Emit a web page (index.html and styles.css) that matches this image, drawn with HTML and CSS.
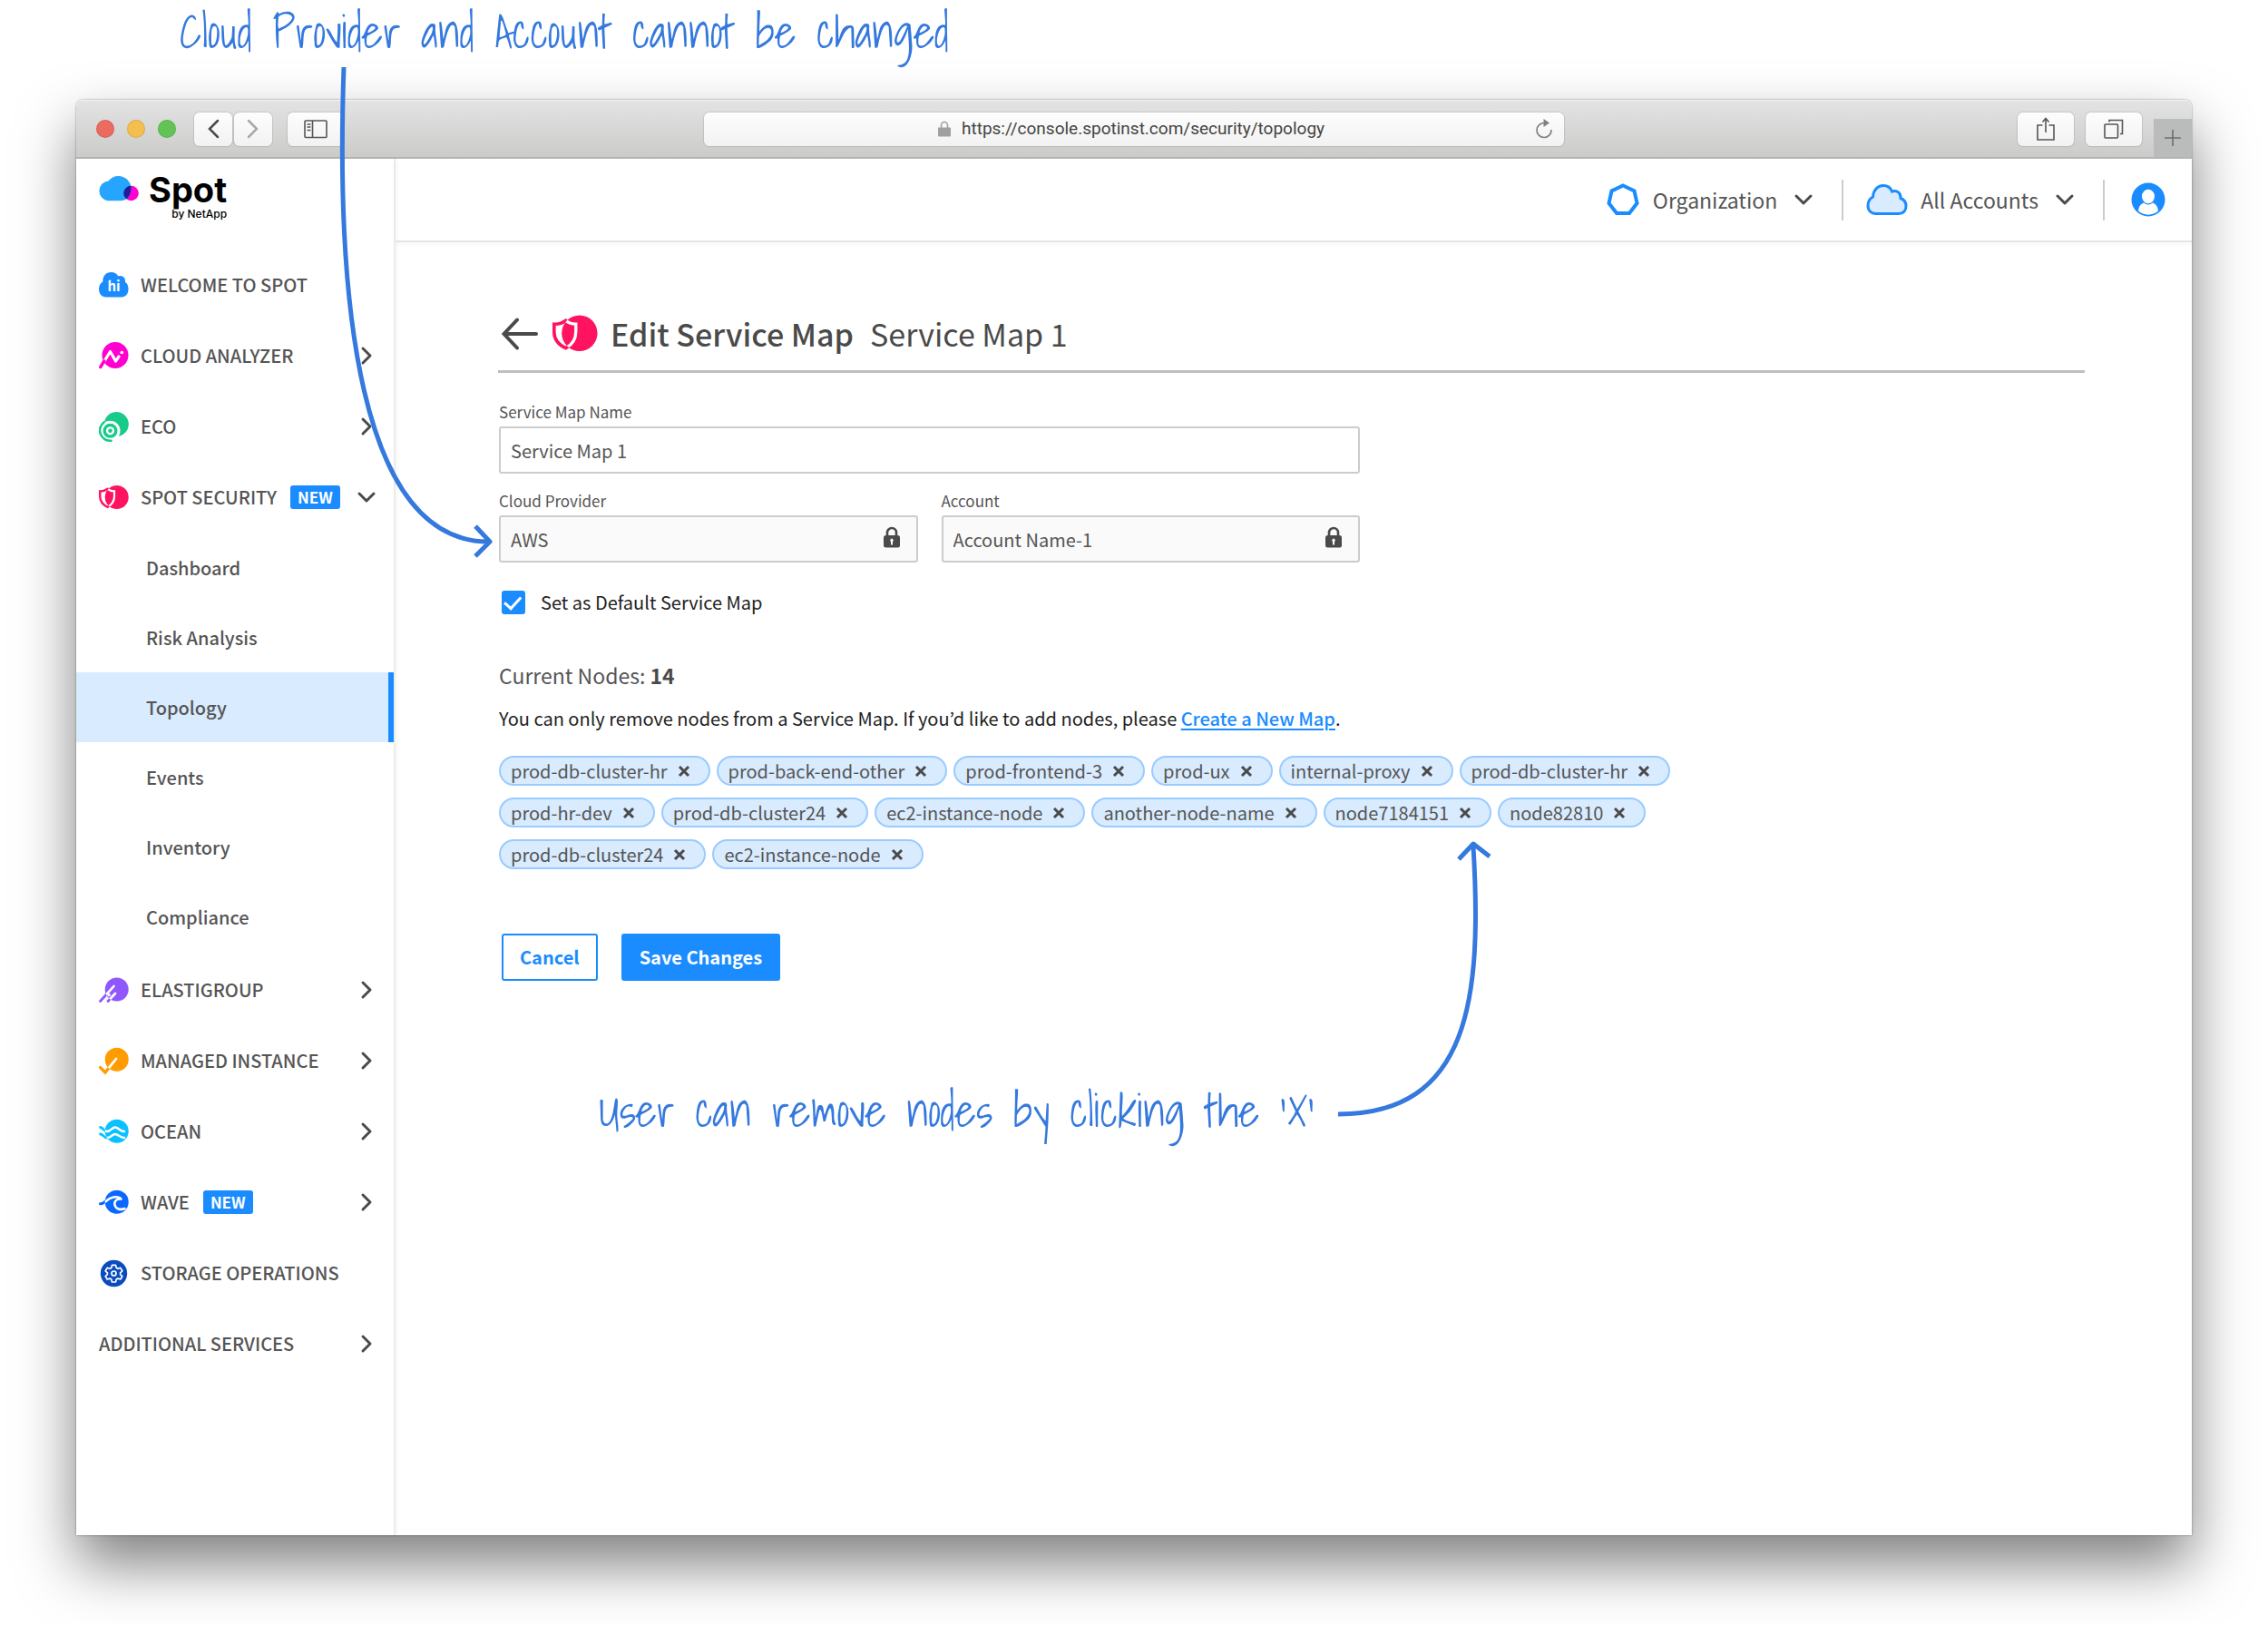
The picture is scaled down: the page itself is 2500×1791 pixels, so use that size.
FILE: index.html
```html
<!DOCTYPE html>
<html lang="en">
<head>
  <meta charset="UTF-8" />
  <meta name="viewport" content="width=device-width, initial-scale=1.0" />
  <title>Spot - Edit Service Map</title>
  <link rel="stylesheet" href="styles.css">
</head>
<body>
  <!-- shared icons -->
  <svg class="sprite" aria-hidden="true">
    <symbol id="i-right" viewBox="0 0 14 22"><path d="M3 3l8 8-8 8" /></symbol>
    <symbol id="i-down" viewBox="0 0 22 14"><path d="M3 3l8 8 8-8" /></symbol>
    <symbol id="i-x" viewBox="0 0 14 14"><path d="M2 2l10 10M12 2L2 12" /></symbol>
    <symbol id="i-lock" viewBox="0 0 20 24">
      <path d="M5 11V7a5 5 0 0 1 10 0v4" fill="none" stroke="#4a4a4a" stroke-width="2.6" />
      <rect x="1" y="10" width="18" height="13.5" rx="2.5" fill="#4a4a4a" />
      <path d="M10 13.6a1.9 1.9 0 0 1 1 3.4v3.4H9V17a1.9 1.9 0 0 1 1-3.4z" fill="#fafafa" />
    </symbol>
    <symbol id="i-security" viewBox="0 0 33 33">
      <clipPath id="c-sec"><circle cx="19.7" cy="16" r="13" /></clipPath>
      <path d="M9.7 6.8C7 8.8 4 9.6 1.2 9.4V15c0 5.5 3.3 9.5 8.5 11.8C14 24.5 17 20.5 17 15V9.4c-2.7 0-5-.6-7.3-2.6z" fill="none" stroke="#ff1260" stroke-width="2.4" />
      <circle cx="19.7" cy="16" r="13" fill="#ff1260" />
      <path d="M9.7 6.8C7 8.8 4 9.6 1.2 9.4V15c0 5.5 3.3 9.5 8.5 11.8C14 24.5 17 20.5 17 15V9.4c-2.7 0-5-.6-7.3-2.6z" fill="none" stroke="#fff" stroke-width="2.2" clip-path="url(#c-sec)" />
    </symbol>
  </svg>

  <div class="window">
    <div class="toolbar">
      <div class="toolbar-left">
        <span class="light red"></span>
        <span class="light yellow"></span>
        <span class="light green"></span>
        <div class="history">
          <button class="tool" aria-label="Back"><svg width="14" height="22" viewBox="0 0 14 22"><path d="M12 2L3 11l9 9" fill="none" stroke="#4a4a4a" stroke-width="2.5" stroke-linecap="round" /></svg></button>
          <button class="tool" aria-label="Forward"><svg width="14" height="22" viewBox="0 0 14 22"><path d="M2 2l9 9-9 9" fill="none" stroke="#a9a9a9" stroke-width="2.5" stroke-linecap="round" /></svg></button>
        </div>
        <button class="tool wide" aria-label="Show sidebar"><svg width="26" height="22" viewBox="0 0 26 22" fill="none" stroke="#555" stroke-width="1.6"><rect x="1" y="2" width="24" height="18.5" rx="1" /><path d="M9.5 2v18.5M3.5 6h4M3.5 9h4M3.5 12.5h4" /></svg></button>
      </div>
      <div class="address">
        <svg width="14" height="18" viewBox="0 0 14 18"><path d="M3.5 8V5a3.5 3.5 0 0 1 7 0v3" fill="none" stroke="#a0a0a0" stroke-width="1.6" /><rect y="7.5" width="14" height="10" rx="1" fill="#a0a0a0" /></svg>
        <input type="text" aria-label="Address" value="https://console.spotinst.com/security/topology">
        <button class="reload" aria-label="Reload"><svg width="20" height="22" viewBox="0 0 20 22"><path d="M10.5 4.5A8 8 0 1 0 18 12" fill="none" stroke="#808080" stroke-width="1.7" /><path d="M9.5 0l6.500 4.500-6.500 4.500z" fill="#808080" /></svg></button>
      </div>
      <div class="toolbar-right">
        <button class="tool wide" aria-label="Share"><svg width="20" height="26" viewBox="0 0 20 26" fill="none" stroke="#555" stroke-width="1.6"><path d="M6.5 9H1v16h18V9h-5.5M10 17V1.5M6.5 5.5L10 1.5l3.5 4" /></svg></button>
        <button class="tool wide" aria-label="Tabs"><svg width="22" height="22" viewBox="0 0 22 22" fill="none" stroke="#555" stroke-width="1.6"><rect x="1" y="6" width="14.5" height="15" rx="1" /><path d="M6 3.5v-2h14.500v15H18" /></svg></button>
        <button class="new-tab" aria-label="New tab"><svg width="20" height="20" viewBox="0 0 20 20"><path d="M10 1v18M1 10h18" stroke="#6d6d6d" stroke-width="1.6" /></svg></button>
      </div>
    </div>

    <div class="app">
      <aside class="sidebar">
        <div class="logo">
          <svg width="46" height="30" viewBox="0 0 46 30">
            <clipPath id="c-logo"><circle cx="36.5" cy="20" r="8.3" /></clipPath>
            <circle cx="36.5" cy="20" r="8.3" fill="#ff00d0" />
            <path d="M10.5 28.3A11 11 0 0 1 11.5 6.5C14 3 18 1 22.5 1 30.5 1 37 7.5 36.5 15.5 35.5 24 31 28.3 25 28.3z" fill="#26a5ff" />
            <path d="M10.5 28.3A11 11 0 0 1 11.5 6.5C14 3 18 1 22.5 1 30.5 1 37 7.5 36.5 15.5 35.5 24 31 28.3 25 28.3z" fill="#1c1c9c" clip-path="url(#c-logo)" />
          </svg>
          <div class="logo-text">
            <span class="logo-name">Spot</span>
            <span class="logo-by">by NetApp</span>
          </div>
        </div>

        <nav class="nav">
          <a href="#" class="nav-item">
            <svg class="nav-icon" viewBox="0 0 33 33"><path d="M8 29.5c-5 0-8-4-8-9 0-4 2-7 4.300-8.100C4.300 6 8 2 13.500 2c3.500 0 6.500 1.700 7.800 4.500 4.200-1.700 8.500 1.500 7.700 6.300 2.500 1.700 3.500 4.700 3.500 7.700 0 5.500-3 9-7.500 9z" fill="#1a8cff" /><text x="16.5" y="23" class="hi">hi</text></svg>
            <span>WELCOME TO SPOT</span>
          </a>
          <a href="#" class="nav-item">
            <svg class="nav-icon" viewBox="0 0 33 33"><clipPath id="c-an"><circle cx="18" cy="15.5" r="14.5" /></clipPath><circle cx="18" cy="15.5" r="14.5" fill="#ff00d0" /><path d="M3 27l9.5-15.500L18.500 22l3.500-5" fill="none" stroke="#fff" stroke-width="3.2" stroke-linejoin="round" stroke-linecap="round" clip-path="url(#c-an)" /><circle cx="25.3" cy="12.5" r="1.8" fill="#fff" /><path d="M1.8 28.5l4-6.500" stroke="#ff00d0" stroke-width="3.4" stroke-linecap="round" /></svg>
            <span>CLOUD ANALYZER</span>
            <svg class="arrow"><use href="#i-right" /></svg>
          </a>
          <a href="#" class="nav-item">
            <svg class="nav-icon" viewBox="0 0 33 33"><circle cx="19.3" cy="13.5" r="13.5" fill="#17cb8a" /><circle cx="12.5" cy="20.8" r="11" fill="#fff" /><path d="M5.5 11.5a11.300 11.300 0 0 0 8 20.200" fill="none" stroke="#17cb8a" stroke-width="2.6" stroke-linecap="round" /><circle cx="12.5" cy="20.8" r="8" fill="#17cb8a" /><circle cx="12.5" cy="20.8" r="4.6" fill="#fff" /><circle cx="12.5" cy="20.8" r="2.3" fill="#17cb8a" /></svg>
            <span>ECO</span>
            <svg class="arrow"><use href="#i-right" /></svg>
          </a>
          <a href="#" class="nav-item">
            <svg class="nav-icon"><use href="#i-security" /></svg>
            <span>SPOT SECURITY</span>
            <span class="badge">NEW</span>
            <svg class="arrow down"><use href="#i-down" /></svg>
          </a>
          <div class="subnav">
            <a href="#">Dashboard</a>
            <a href="#">Risk Analysis</a>
            <a href="#" class="active">Topology</a>
            <a href="#">Events</a>
            <a href="#">Inventory</a>
            <a href="#">Compliance</a>
          </div>
          <a href="#" class="nav-item">
            <svg class="nav-icon" viewBox="0 0 33 33" stroke-linecap="round"><clipPath id="c-el"><circle cx="19.7" cy="15.5" r="13" /></clipPath><path d="M1.5 28.5l15-16.500M10 28.500l8-8.500" stroke="#9157ff" stroke-width="2.8" /><circle cx="19.7" cy="15.5" r="13" fill="#9157ff" /><path d="M1.5 28.500l15-16.500M10 28.500l8-8.500M11 22l.5-.5" stroke="#fff" stroke-width="2.6" clip-path="url(#c-el)" /></svg>
            <span>ELASTIGROUP</span>
            <svg class="arrow"><use href="#i-right" /></svg>
          </a>
          <a href="#" class="nav-item">
            <svg class="nav-icon" viewBox="0 0 33 33" fill="none" stroke-linecap="round"><clipPath id="c-mi"><circle cx="19.7" cy="14.7" r="13" /></clipPath><path d="M1.5 23.5L7 29l12-15" stroke="#ff9c00" stroke-width="3.2" /><circle cx="19.7" cy="14.7" r="13" fill="#ff9c00" /><path d="M1.5 23.5L7 29l12-15" stroke="#fff" stroke-width="2.8" clip-path="url(#c-mi)" /></svg>
            <span>MANAGED INSTANCE</span>
            <svg class="arrow"><use href="#i-right" /></svg>
          </a>
          <a href="#" class="nav-item">
            <svg class="nav-icon" viewBox="0 0 33 33" fill="none" stroke-linecap="round"><clipPath id="c-oc"><circle cx="19.7" cy="15.8" r="13" /></clipPath><path d="M1.5 11.5C5 11.5 5 16 9 16s5.500-4.500 9-4.500 5 4.500 10 4.500M1.500 19C5 19 5 23 9 23s5.500-4 9-4 5 4 10 4" stroke="#0bc0ff" stroke-width="2.8" /><circle cx="19.7" cy="15.8" r="13" fill="#0bc0ff" /><path d="M1.5 11.5C5 11.5 5 16 9 16s5.500-4.500 9-4.500 5 4.500 10 4.500M1.500 19C5 19 5 23 9 23s5.500-4 9-4 5 4 10 4" stroke="#fff" stroke-width="2.5" clip-path="url(#c-oc)" /></svg>
            <span>OCEAN</span>
            <svg class="arrow"><use href="#i-right" /></svg>
          </a>
          <a href="#" class="nav-item">
            <svg class="nav-icon" viewBox="0 0 33 33" fill="none" stroke-linecap="round"><clipPath id="c-wa"><circle cx="19.7" cy="15.8" r="13" /></clipPath><path d="M1.5 17.8C7 18 8 11.5 16 10.5" stroke="#0a68ff" stroke-width="3" /><circle cx="19.7" cy="15.8" r="13" fill="#0a68ff" /><path d="M1.5 17.8C7.5 18 8 12 16 10.500c4-.6 7 .2 8.500 2C20 12 16.500 14.500 17.500 19c1 4.500 6 6 11 4" stroke="#fff" stroke-width="2.6" stroke-linejoin="round" clip-path="url(#c-wa)" /></svg>
            <span>WAVE</span>
            <span class="badge">NEW</span>
            <svg class="arrow"><use href="#i-right" /></svg>
          </a>
          <a href="#" class="nav-item">
            <svg class="nav-icon" viewBox="0 0 33 33" fill="none" stroke="#fff" stroke-linejoin="round"><circle cx="16.5" cy="16.5" r="14.7" fill="#0b4cbd" stroke="none" /><path d="M14.5 7.400h4l.7 2.900 1.700 1 2.900-.9 2 3.400-2.200 2v1.800l2.200 2-2 3.400-2.900-.9-1.700 1-.7 2.900h-4l-.7-2.900-1.700-1-2.900.9-2-3.400 2.200-2v-1.800l-2.200-2 2-3.400 2.900.9 1.700-1z" stroke-width="1.7" /><circle cx="16.5" cy="16.5" r="2.5" stroke-width="1.7" /></svg>
            <span>STORAGE OPERATIONS</span>
          </a>
          <a href="#" class="nav-item">
            <span>ADDITIONAL SERVICES</span>
            <svg class="arrow"><use href="#i-right" /></svg>
          </a>
        </nav>
      </aside>

      <div class="page">
        <header class="topbar">
          <button class="picker">
            <svg width="38" height="38" viewBox="0 0 38 38"><path d="M19 3.5l12.500 6 3 13.500-8.500 11H12L3.500 23l3-13.500z" fill="none" stroke="#1a8cff" stroke-width="4" /></svg>
            <span>Organization</span>
            <svg class="caret"><use href="#i-down" /></svg>
          </button>
          <button class="picker">
            <svg width="46" height="36" viewBox="0 0 46 36"><path d="M11 33.500C5.500 33.500 2 30 2 24.500c0-4.500 2-7.500 5.500-9.500C8 7.500 12.500 2.500 19 2.500c4.500 0 8 2.500 9.500 6.500 5.500-2 10 2 9.500 7.500 4 1.500 6 5 6 8.500 0 5-3 8.500-8 8.500z" fill="#d9ebfe" stroke="#1a8cff" stroke-width="3" /></svg>
            <span>All Accounts</span>
            <svg class="caret"><use href="#i-down" /></svg>
          </button>
          <button class="profile" aria-label="Profile"><svg width="38" height="38" viewBox="0 0 38 38"><circle cx="19" cy="19" r="18.5" fill="#1a8cff" /><ellipse cx="19" cy="15.5" rx="7" ry="7.8" fill="#fff" /><path d="M8 31.500C8.500 26.500 11 23.500 14 22.500c3 2.500 7 2.500 10 0 3 1 5.500 4 6 9-6 5.500-16 5.500-22 0z" fill="#fff" /></svg></button>
        </header>

        <main class="content">
          <div class="title">
            <a href="#" class="back" aria-label="Back"><svg width="40" height="36" viewBox="0 0 40 36"><path d="M17 2.500L2.500 18 17 33.500M3 18h35" fill="none" stroke="#4a4a4a" stroke-width="4" stroke-linecap="round" /></svg></a>
            <svg width="50" height="50"><use href="#i-security" /></svg>
            <h1>Edit Service Map</h1>
            <span class="subtitle">Service Map 1</span>
          </div>

          <form class="form">
            <div class="field full">
              <label for="mapName">Service Map Name</label>
              <input type="text" id="mapName" value="Service Map 1">
            </div>
            <div class="field">
              <label for="provider">Cloud Provider</label>
              <div class="locked"><input type="text" id="provider" value="AWS" readonly><svg width="20" height="24"><use href="#i-lock" /></svg></div>
            </div>
            <div class="field">
              <label for="account">Account</label>
              <div class="locked"><input type="text" id="account" value="Account Name-1" readonly><svg width="20" height="24"><use href="#i-lock" /></svg></div>
            </div>
          </form>

          <label class="check"><input type="checkbox" checked> Set as Default Service Map</label>

          <h2>Current Nodes: <b>14</b></h2>
          <p class="hint">You can only remove nodes from a Service Map. If you’d like to add nodes, please <a href="#">Create a New Map</a>.</p>

          <div class="chips">
            <span class="chip">prod-db-cluster-hr <button aria-label="Remove"><svg><use href="#i-x" /></svg></button></span>
            <span class="chip">prod-back-end-other <button aria-label="Remove"><svg><use href="#i-x" /></svg></button></span>
            <span class="chip">prod-frontend-3 <button aria-label="Remove"><svg><use href="#i-x" /></svg></button></span>
            <span class="chip">prod-ux <button aria-label="Remove"><svg><use href="#i-x" /></svg></button></span>
            <span class="chip">internal-proxy <button aria-label="Remove"><svg><use href="#i-x" /></svg></button></span>
            <span class="chip">prod-db-cluster-hr <button aria-label="Remove"><svg><use href="#i-x" /></svg></button></span>
            <span class="chip">prod-hr-dev <button aria-label="Remove"><svg><use href="#i-x" /></svg></button></span>
            <span class="chip">prod-db-cluster24 <button aria-label="Remove"><svg><use href="#i-x" /></svg></button></span>
            <span class="chip">ec2-instance-node <button aria-label="Remove"><svg><use href="#i-x" /></svg></button></span>
            <span class="chip">another-node-name <button aria-label="Remove"><svg><use href="#i-x" /></svg></button></span>
            <span class="chip">node7184151 <button aria-label="Remove"><svg><use href="#i-x" /></svg></button></span>
            <span class="chip">node82810 <button aria-label="Remove"><svg><use href="#i-x" /></svg></button></span>
            <span class="chip">prod-db-cluster24 <button aria-label="Remove"><svg><use href="#i-x" /></svg></button></span>
            <span class="chip">ec2-instance-node <button aria-label="Remove"><svg><use href="#i-x" /></svg></button></span>
          </div>

          <div class="actions">
            <button class="btn">Cancel</button>
            <button class="btn primary">Save Changes</button>
          </div>
        </main>
      </div>
    </div>
  </div>

  <!-- notes drawn over the window -->
  <div class="note note-provider">Cloud Provider and Account cannot be changed</div>
  <svg class="note-line line-provider" width="176" height="550" viewBox="0 0 176 550"><path d="M9 4C0 260 25 526 168 527M154 510l16 17-16 16" /></svg>
  <div class="note note-nodes">User can remove nodes by clicking the 'X'</div>
  <svg class="note-line line-nodes" width="180" height="310" viewBox="0 0 180 310"><path d="M5 303C150 303 164 175 154 8M138 22L154 5l18 14" /></svg>
</body>
</html>
```
FILE: styles.css
```css
:root {
  --blue: #1a8cff;
  --pale: #d9ebfe;
  --text: #555;
  --dark: #4a4a4a;
  --ink: #3579de;
}

* {
  box-sizing: border-box;
}

body {
  position: relative;
  margin: 0;
  padding: 110px 84px 99px;
  min-height: 100vh;
  display: flex;
  background: #fff;
  color: var(--text);
  font-family: "Source Sans Pro", "Noto Sans CJK KR", sans-serif;
  font-size: 20px;
  line-height: 28px;
}

button, input {
  font: inherit;
  color: inherit;
}

button {
  padding: 0;
  border: none;
  background: none;
  cursor: pointer;
}

a {
  color: inherit;
  text-decoration: none;
}

svg {
  display: block;
  flex: none;
}

.sprite {
  position: absolute;
  width: 0;
  height: 0;
}

/* browser window */
.window {
  flex: 1;
  display: flex;
  flex-direction: column;
  border-radius: 8px 8px 0 0;
  background: #fff;
  box-shadow: 0 0 2px rgba(0,0,0,0.5), 0 32px 64px rgba(0,0,0,0.5);
}

.toolbar {
  display: grid;
  grid-template-columns: 1fr minmax(0, 948px) 1fr;
  align-items: center;
  height: 65px;
  border-top: 1px solid #f2f2f2;
  border-bottom: 2px solid #b4b4b4;
  border-radius: 8px 8px 0 0;
  background: linear-gradient(#e3e3e3, #cbcbca);
}

.toolbar-left, .toolbar-right, .history {
  display: flex;
  align-items: center;
}

.toolbar-left {
  padding-left: 22px;
  gap: 14px;
}

.light {
  width: 20px;
  height: 20px;
  border-radius: 50%;
  border: 1px solid rgba(0,0,0,0.1);
}

.red { background: #ec6b60; }
.yellow { background: #f5bf4f; }
.green { background: #61c454; }

.history {
  gap: 2px;
  margin: 0 3px 0 6px;
}

.tool, .address {
  display: flex;
  align-items: center;
  justify-content: center;
  height: 37px;
  border-radius: 6px;
  background: linear-gradient(#fdfdfd, #f2f2f2);
  box-shadow: 0 0 1px 1px rgba(0,0,0,0.1);
}

.tool {
  width: 42px;
}

.tool.wide {
  width: 62px;
}

.address {
  position: relative;
  gap: 12px;
}

.address input {
  width: 406px;
  padding: 0;
  border: none;
  background: none;
  color: #444;
  font-family: Roboto, sans-serif;
  font-size: 19px;
}

.reload {
  position: absolute;
  right: 12px;
}

.toolbar-right {
  align-self: stretch;
  justify-content: flex-end;
  gap: 13px;
}

.new-tab {
  display: flex;
  align-items: center;
  justify-content: center;
  align-self: flex-end;
  width: 42px;
  height: 42px;
  background: #b9bcbb;
}

/* layout */
.app {
  flex: 1;
  display: flex;
}

.sidebar {
  width: 352px;
  border-right: 2px solid #ececec;
  box-shadow: 2px 0 4px rgba(0,0,0,0.04);
}

.page {
  flex: 1;
}

/* sidebar */
.logo {
  display: flex;
  gap: 10px;
  height: 100px;
  padding: 18px 24px;
}

.logo-text {
  display: flex;
  flex-direction: column;
  align-items: flex-end;
  font-family: Inter, sans-serif;
  color: #000;
}

.logo-name {
  font-size: 38px;
  font-weight: 700;
  line-height: 32px;
}

.logo-by {
  font-size: 12px;
  font-weight: 500;
  line-height: 22px;
}

.nav-item {
  display: flex;
  align-items: center;
  height: 78px;
  padding: 0 23px 0 25px;
  font-weight: 500;
}

.nav-icon {
  width: 33px;
  height: 33px;
  margin-right: 13px;
}

.hi {
  fill: #fff;
  font-size: 15px;
  font-weight: 700;
  text-anchor: middle;
}

.arrow {
  width: 14px;
  height: 22px;
  margin-left: auto;
}

.arrow.down, .caret {
  width: 22px;
  height: 14px;
}

.arrow.down {
  margin-right: -4px;
}

.arrow, .caret {
  fill: none;
  stroke: var(--dark);
  stroke-width: 3;
  stroke-linecap: round;
  stroke-linejoin: round;
}

.badge {
  margin-left: 15px;
  padding: 0 8px;
  border-radius: 3px;
  background: var(--blue);
  color: #fff;
  font-size: 17px;
  font-weight: 700;
  line-height: 26px;
}

.subnav {
  padding-bottom: 3px;
}

.subnav a {
  display: flex;
  align-items: center;
  height: 77px;
  padding-left: 77px;
  font-weight: 500;
}

.subnav .active {
  background: var(--pale);
  border-right: 6px solid var(--blue);
}

/* top bar */
.topbar {
  display: flex;
  align-items: center;
  justify-content: flex-end;
  height: 92px;
  padding-right: 29px;
  border-bottom: 2px solid #e6e6e6;
  box-shadow: 0 2px 4px rgba(0,0,0,0.04);
}

.picker {
  display: flex;
  align-items: center;
  height: 45px;
  margin-right: 25px;
  padding-right: 31px;
  border-right: 2px solid #ccc;
  font-size: 23px;
}

.picker + .profile {
  margin-left: 4px;
}

.picker span {
  margin: 0 18px 0 14px;
}

/* content */
.content {
  padding: 64px 118px 64px 113px;
}

.title {
  display: flex;
  align-items: center;
  height: 80px;
  padding: 0 0 4px 4px;
  border-bottom: 3px solid #bfbfbf;
}

.back {
  margin-right: 16px;
}

.title h1, .subtitle {
  margin: 0 0 0 14px;
  font-size: 34px;
  font-weight: 500;
  line-height: 48px;
  color: var(--dark);
}

.title .subtitle {
  margin-left: 18px;
  font-weight: 400;
}

.form {
  display: grid;
  grid-template-columns: 1fr 1fr;
  gap: 17px 26px;
  max-width: 950px;
  padding: 30px 0 0 1px;
}

.field {
  display: flex;
  flex-direction: column;
  gap: 4px;
}

.field.full {
  grid-column: 1 / 3;
}

.field label {
  font-size: 17px;
  line-height: 25px;
}

.field input {
  width: 100%;
  height: 52px;
  padding: 0 11px;
  border: 2px solid #ccc;
  border-radius: 3px;
  background: #fff;
}

.locked {
  position: relative;
}

.locked input {
  background: #fafafa;
}

.locked svg {
  position: absolute;
  top: 12px;
  right: 19px;
}

.check {
  display: flex;
  align-items: center;
  gap: 17px;
  margin: 30px 0 0 4px;
  color: #222;
}

.check input {
  appearance: none;
  width: 26px;
  height: 26px;
  margin: 0;
  border-radius: 3px;
  background: var(--blue);
  display: grid;
  place-items: center;
}

.check input:checked::before {
  content: "";
  width: 15px;
  height: 8px;
  border: solid #fff;
  border-width: 0 0 3px 3px;
  transform: rotate(-48deg) translate(1px, -2px);
}

h2 {
  margin: 48px 0 0 1px;
  font-size: 23px;
  font-weight: 400;
  line-height: 36px;
}

h2 b {
  color: var(--dark);
}

.hint {
  margin: 16px 0 27px 1px;
  color: #222;
}

.hint a {
  color: var(--blue);
  font-weight: 500;
  text-decoration: underline;
  text-decoration-thickness: 2px;
  text-underline-offset: 3px;
}

.chips {
  display: flex;
  flex-wrap: wrap;
  gap: 13px 7px;
  max-width: 1320px;
  margin-left: 1px;
}

.chip {
  display: flex;
  align-items: center;
  gap: 11px;
  height: 33px;
  padding: 0 20px 0 11px;
  border: 2px solid #99cbff;
  border-radius: 17px;
  background: var(--pale);
}

.chip svg {
  width: 14px;
  height: 14px;
  stroke: var(--dark);
  stroke-width: 3;
}

.actions {
  display: flex;
  gap: 26px;
  margin: 71px 0 0 4px;
}

.btn {
  height: 52px;
  padding: 0 18px;
  border: 2px solid var(--blue);
  border-radius: 3px;
  color: var(--blue);
  font-weight: 700;
}

.btn.primary {
  background: var(--blue);
  color: #fff;
}

/* notes */
.note {
  position: absolute;
  color: var(--ink);
  font-family: "Shadows Into Light", "Open Sans", sans-serif;
  font-size: 50px;
  line-height: 60px;
  white-space: nowrap;
}

.note-provider {
  top: 5px;
  left: 198px;
}

.note-nodes {
  top: 1194px;
  left: 660px;
}

.note-line {
  position: absolute;
  fill: none;
  stroke: var(--ink);
  stroke-width: 5;
  stroke-linejoin: round;
}

.line-provider {
  top: 70px;
  left: 370px;
}

.line-nodes {
  top: 925px;
  left: 1470px;
}
```
